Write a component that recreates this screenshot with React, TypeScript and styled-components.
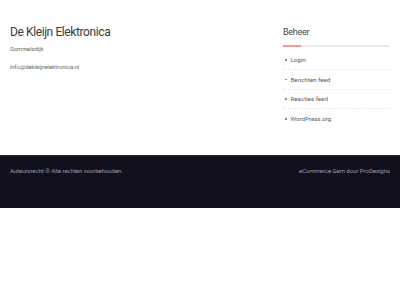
import styled, { createGlobalStyle } from 'styled-components';

const GlobalStyle = createGlobalStyle`
  html, body {
    margin: 0;
    padding: 0;
    background: #ffffff;
    font-family: 'Roboto', 'Liberation Sans', sans-serif;
  }
`;

const links = ['Login', 'Berichten feed', 'Reacties feed', 'WordPress.org'];

export default function App() {
  return (
    <>
      <GlobalStyle />
      <Widgets>
        <Contact>
          <SiteTitle>De Kleijn Elektronica</SiteTitle>
          <SmallText>Sommelsdijk</SmallText>
          <SmallText>info@dekleijnelektronica.nl</SmallText>
        </Contact>
        <Sidebar>
          <WidgetTitle>Beheer</WidgetTitle>
          <LinkList>
            {links.map((link) => (
              <LinkItem key={link}>
                <Bullet />
                <a href='#'>{link}</a>
              </LinkItem>
            ))}
          </LinkList>
        </Sidebar>
      </Widgets>
      <Footer>
        <FooterText>Auteursrecht © Alle rechten voorbehouden.</FooterText>
        <FooterText>eCommerce Gem door ProDesigns</FooterText>
      </Footer>
    </>
  );
}

const Widgets = styled.div`
  display: flex;
  justify-content: space-between;
  padding: 24px 10px 0 10px;
  height: 155px;
  box-sizing: border-box;
`;

const Contact = styled.div`
  display: flex;
  flex-direction: column;
`;

const SiteTitle = styled.h2`
  margin: 0 0 5px;
  font-size: 12px;
  font-weight: 400;
  line-height: 16px;
  letter-spacing: -0.4px;
  color: #3a3a3a;
`;

const SmallText = styled.p`
  margin: 0 0 10px;
  font-size: 6px;
  line-height: 8px;
  letter-spacing: -0.1px;
  color: #6a6a6a;
`;

const Sidebar = styled.div`
  width: 107px;
`;

const WidgetTitle = styled.h3`
  position: relative;
  margin: 0;
  padding: 2px 0 7px;
  font-size: 9px;
  font-weight: 400;
  line-height: 12px;
  letter-spacing: -0.3px;
  color: #444;
  border-bottom: 2px solid #ececec;

  &::after {
    content: '';
    position: absolute;
    left: 0;
    bottom: -2px;
    width: 18px;
    height: 2px;
    background: #f39a9e;
  }
`;

const LinkList = styled.ul`
  list-style: none;
  margin: 4px 0 0;
  padding: 0;
`;

const LinkItem = styled.li`
  display: flex;
  align-items: center;
  gap: 4px;
  height: 19.4px;
  box-sizing: border-box;
  padding-left: 2px;
  border-bottom: 1px dashed #ececec;

  &:last-child {
    border-bottom: none;
  }

  a {
    font-size: 6.2px;
    color: #5a5a5a;
    text-decoration: none;
  }
`;

const Bullet = styled.span`
  width: 1.5px;
  height: 1.5px;
  border-radius: 50%;
  background: #777;
`;

const Footer = styled.footer`
  display: flex;
  justify-content: space-between;
  align-items: flex-start;
  height: 53px;
  box-sizing: border-box;
  padding: 11px 10px 0;
  background: #12101d;
  border-top: 1px solid #2e2c3b;
`;

const FooterText = styled.span`
  font-size: 6px;
  line-height: 8px;
  letter-spacing: -0.05px;
  color: #9d9bab;
`;
